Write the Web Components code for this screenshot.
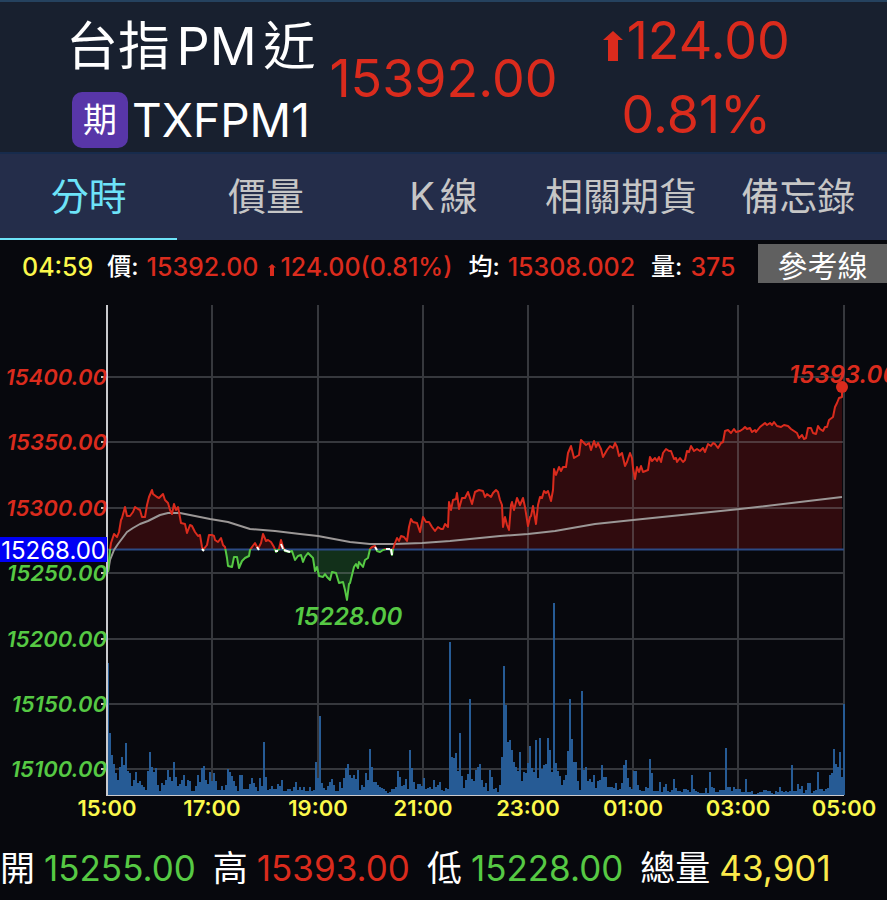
<!DOCTYPE html>
<html lang="zh-Hant">
<head>
<meta charset="utf-8">
<meta name="viewport" content="width=device-width, initial-scale=1">
<title>台指PM近</title>
<style>
  :root {
    --up: #da2b1d; --down: #56c944; --time: #fbf84b; --total: #fbe94a;
    --ink: #fff; --page: #07080d;
  }
  html { background: #07080d; }
  body { margin: 0; background: var(--page); color: var(--ink); font-family: Inter, "Noto Sans CJK TC", sans-serif; }
</style>
</head>
<body>
<quote-page></quote-page>

<script>
const define = (name, html, setup) => {
  const template = document.createElement('template');
  template.innerHTML = html;
  customElements.define(name, class extends HTMLElement {
    constructor() {
      super();
      this.attachShadow({ mode: 'open' }).append(template.content.cloneNode(true));
    }
    connectedCallback() { if (setup) setup(this, this.shadowRoot); }
  });
};

define('up-arrow', `
  <style>
    :host { display: inline-block; width: 20px; }
    svg { display: block; width: 100%; fill: currentColor; }
  </style>
  <svg viewBox="0 0 20 30" aria-hidden="true"><path d="M10 0 20 9H15V30H5V9H0Z"/></svg>`);

define('quote-header', `
  <style>
    :host { display: grid; height: 154px; box-sizing: border-box;
      grid-template-columns: minmax(0, 1fr) auto minmax(0, 1fr);
      border-top: 2px solid #25425f; border-bottom: 2px solid #172b4c; background: #18202f; line-height: 1; }
    .name, .change { display: flex; flex-direction: column; align-items: center; }
    .name { align-items: flex-start; padding-left: 66px; white-space: nowrap; }
    h1 { margin: 17px 0 0; font-size: 52px; font-weight: 400; line-height: 56px; text-autospace: normal; }
    .code { display: flex; align-items: center; gap: 4px; margin: 17px 0 0 6px; font-size: 46px; }
    .badge { display: grid; place-items: center; width: 56px; height: 56px; border-radius: 10px; background: #5836a8; font-size: 34px; }
    .price { align-self: center; padding-top: 4px; font-size: 52px; color: var(--up); }
    .change { color: var(--up); font-size: 52px; padding: 13px 52px 0 0; gap: 22px; }
    .change div { display: flex; align-items: center; gap: 4px; }
    up-arrow { margin-top: 10px; }
  </style>
  <div class="name"><h1>台指PM近</h1><div class="code"><span class="badge">期</span><span>TXFPM1</span></div></div>
  <div class="price">15392.00</div>
  <div class="change"><div><up-arrow></up-arrow><span>124.00</span></div><div>0.81%</div></div>`);

define('quote-tabs', `
  <style>
    :host { display: block; background: #242d4a; }
    nav { display: grid; grid-template-columns: repeat(5, minmax(0, 1fr)); }
    button { height: 86px; padding: 0; border: 0; border-bottom: 2px solid transparent; background: none; color: #c6c6c6;
      font: 38px/1 Inter, "Noto Sans CJK TC", sans-serif; text-autospace: normal; white-space: nowrap; }
    button[aria-selected="true"] { color: #6de3f8; border-bottom-color: #6de3f8; }
  </style>
  <nav role="tablist">
    <button role="tab" aria-selected="true">分時</button><button role="tab" aria-selected="false">價量</button><button role="tab" aria-selected="false">K線</button><button role="tab" aria-selected="false">相關期貨</button><button role="tab" aria-selected="false">備忘錄</button>
  </nav>`);

define('tick-info', `
  <style>
    :host { display: flex; align-items: center; height: 50px; box-sizing: border-box; padding: 4px 0 0 22px; font-size: 25px; line-height: 36px; font-weight: 500; white-space: nowrap; }
    span { margin-right: 16px; }
    b { font-size: 24px; font-weight: 500; margin-right: 8px; }
    .time { margin-right: 14px; color: var(--time); }
    .up { color: var(--up); }
    .move { display: flex; align-items: center; gap: 4px; }
    .price { margin-right: 10px; }
    up-arrow { width: 8px; margin-top: 6px; }
    button { align-self: flex-start; margin-left: auto; width: 129px; height: 39px; border: 0; padding: 0; background: #606060; color: #fff; font: 30px/36px "Noto Sans CJK TC", sans-serif; }
  </style>
  <span class="time">04:59</span><b>價:</b><span class="up price">15392.00</span>
  <span class="up move"><up-arrow></up-arrow>124.00(0.81%)</span>
  <b>均:</b><span class="up">15308.002</span><b>量:</b><span class="up">375</span>
  <button type="button">參考線</button>`);

define('day-summary', `
  <style>
    :host { display: flex; align-items: center; height: 68px; font-size: 35px; line-height: 48px; white-space: nowrap; }
    dl { display: flex; align-items: center; gap: 17px; margin: 0; }
    div { display: flex; align-items: center; gap: 9px; }
    dd { margin: 0; }
    .up { color: var(--up); } .down { color: var(--down); } .total { color: var(--total); }
  </style>
  <dl>
    <div><dt>開</dt><dd class="down">15255.00</dd></div>
    <div><dt>高</dt><dd class="up">15393.00</dd></div>
    <div><dt>低</dt><dd class="down">15228.00</dd></div>
    <div><dt>總量</dt><dd class="total">43,901</dd></div>
  </dl>`);

const PRICE = `108,572 110,550 111,543 112,540 114,534 117,537 119,532 121,520 122,518 125,507 127,516 130,516 133,512 135,507
138,509 140,510 142,517 145,517 147,505 149,497 152,490 153,494 157,497 159,498 163,494 165,500 168,503 170,510 172,514 174,504
176,510 178,507 179,512 181,523 185,524 187,533 190,525 192,526 195,532 198,536 200,535 202,547 203,550 207,545 209,535 212,535
214,536 215,540 218,542 221,538 223,545 225,547 227,558 228,566 232,567 234,557 237,557 239,568 242,561 245,558 249,556 250,550
252,547 255,543 258,549 261,543 263,534 266,541 268,540 271,542 274,547 276,552 279,549 281,540 283,547 285,551 289,552 292,551
295,560 298,556 301,555 303,562 305,557 308,553 311,556 313,558 315,571 317,567 319,576 323,577 325,574 327,577 330,580 332,572
336,573 339,583 343,582 345,590 347,600 349,584 350,583 354,567 356,564 358,568 359,562 363,567 365,560 368,558 370,549 372,547
375,546 377,551 380,552 383,550 386,549 389,549 391,550 392,555 393,549 395,543 397,538 399,541 401,536 404,537 407,541 409,527
411,519 413,522 417,523 420,532 423,517 426,522 429,522 432,527 435,531 438,527 441,529 443,529 445,524 448,527 449,502 451,510
453,500 456,499 457,493 459,509 462,498 465,498 468,492 472,504 475,492 479,490 483,491 485,497 487,494 491,497 493,493 496,490
498,492 500,500 502,505 503,527 505,517 507,525 509,530 511,505 512,502 514,510 517,498 520,505 523,498 525,507 528,526 530,517
531,516 533,506 536,524 538,505 540,497 542,498 544,491 546,493 548,491 551,501 553,490 554,469 556,475 559,467 561,471 563,467
566,467 568,453 571,446 574,458 579,455 581,440 583,442 586,445 589,443 591,450 594,441 596,447 598,443 601,449 603,457 607,450
610,446 613,448 615,443 617,447 619,456 622,453 625,466 627,462 630,453 632,458 633,468 635,479 637,467 639,472 641,466 643,472
648,470 650,457 652,461 655,458 657,461 659,457 661,462 663,453 666,449 669,451 671,451 674,459 676,458 677,462 680,458 683,462
685,460 687,451 689,452 691,446 694,451 697,449 700,451 703,448 705,452 708,444 711,446 713,443 715,444 718,448 721,443 723,442
725,431 728,430 731,433 734,429 736,432 740,431 743,429 745,427 747,429 750,428 752,432 755,430 756,432 760,427 765,423 767,425
770,423 772,425 774,422 777,426 781,427 784,425 788,426 791,429 794,431 797,433 799,438 802,435 804,439 806,438 808,428 811,428
813,433 816,434 818,426 820,429 823,431 825,427 827,427 829,420 833,417 835,407 837,403 839,398 842,397 842,387`;

const AVERAGE = `108,572 110,560 114,550 118,544 127,532 133,528 140,524 148,521 160,515 168,513 180,513 195,516 210,519 228,522
250,529 275,531 300,534 318,536 350,542 370,544 395,544 422,543 450,541 500,536 528,534 555,531 595,524 633,520 740,509 842,497`;

/* Volume, one value for each two units of the time axis. */
const VOLUME = [
132,62,40,31,22,15,28,38,30,52,24,22,9,15,23,12,14,10,8,5,24,43,28,23,27,10,4,12,10,15,25,18,14,33,18,9,11,15,20,9,
15,14,4,4,9,20,13,27,29,15,11,23,14,22,14,5,5,9,5,10,26,23,19,14,9,4,20,20,6,6,6,11,17,12,8,4,17,9,53,18,
5,6,9,6,6,11,9,15,4,4,6,6,4,8,13,5,8,5,8,4,4,8,4,5,33,17,79,12,7,5,9,13,16,10,4,4,13,7,17,27,
31,20,17,20,16,25,5,10,8,22,15,46,28,13,13,10,8,7,6,4,2,3,6,6,8,24,18,9,10,16,6,45,27,13,6,11,11,9,17,6,
7,8,6,15,8,10,13,5,4,7,6,153,38,37,42,24,62,19,7,15,21,96,16,14,25,28,31,15,8,12,4,25,18,6,7,3,10,38,129,90,
53,55,45,33,28,24,43,14,23,22,32,49,27,23,55,17,57,26,30,31,57,45,23,192,32,24,19,10,15,20,44,96,56,33,33,14,5,104,25,28,
14,16,13,20,7,14,15,30,18,18,8,8,8,7,12,5,6,12,30,35,17,8,6,24,24,10,5,4,4,8,7,36,22,4,4,4,13,3,8,11,
4,3,5,16,7,4,4,3,6,6,5,3,20,6,4,3,2,2,2,7,2,23,8,7,3,3,5,5,5,47,8,8,4,8,6,6,6,3,3,16,
3,3,4,1,1,2,3,3,5,5,4,4,2,1,4,3,8,4,3,4,3,4,30,4,4,11,6,9,2,5,12,12,2,4,5,23,6,6,4,6,
7,20,22,46,31,28,43,18,91];

define('intraday-chart', `
  <style>
    :host { display: block; }
    svg { display: block; width: 100%; font-family: Inter, sans-serif; font-weight: 600; font-size: 22px; }
    .grid { stroke: #8b8c92; stroke-opacity: .36; stroke-width: 2; fill: none; }
    .axis { stroke: #c9cacd; stroke-width: 2; fill: none; }
    .price { font-style: italic; font-weight: 600; }
    .scale { font-size: 22px; }
    .mark { font-size: 24px; }
    .base { font-size: 24px; font-weight: 400; fill: #fff; }
    .up { fill: var(--up); } .down { fill: var(--down); }
    .time { fill: var(--time); text-anchor: middle; }
    .line { fill: none; stroke-width: 2; stroke-linejoin: round; }
  </style>
  <svg viewBox="0 290 887 540" role="img" aria-label="分時走勢圖">
    <defs>
      <clipPath id="above"><rect x="108" y="290" width="737" height="259"/></clipPath>
      <clipPath id="below"><rect x="108" y="549" width="737" height="250"/></clipPath>
    </defs>
    <g id="areas"></g>
    <path class="grid" id="grid"/>
    <path id="bars" fill="#265b95"/>
    <path d="M108 549.5H844" stroke="#2c4b85" stroke-width="2"/>
    <g id="lines"></g>
    <path class="axis" d="M107 305V796"/>
    <path d="M107 795.5H844" stroke="#c9cacd"/>
    <rect x="0" y="537" width="107" height="25" fill="#0000f5"/>
    <path id="ticks" class="axis"/>
    <g id="labels"></g>
    <circle cx="842" cy="387" r="6" class="up"/>
  </svg>`,
(host, root) => {
  const $ = id => root.getElementById(id);
  const ys = [377, 442, 508, 573, 639, 704, 769];
  const xs = [212, 318, 423, 528, 633, 738, 844];
  $('grid').setAttribute('d', ys.map(y => `M108 ${y}H844`).join('') + xs.map(x => `M${x} 305V795`).join(''));
  $('ticks').setAttribute('d', ys.map(y => `M101 ${y}H107`).join(''));
  $('bars').setAttribute('d', VOLUME.map((h, i) => `M${107 + 2 * i} 795v${-h}h2v${h}z`).join(''));
  const area = `108,549 ${PRICE} 842,549`;
  $('areas').innerHTML = `
    <polygon points="${area}" fill="#300b0e" clip-path="url(#above)"/>
    <polygon points="${area}" fill="#12301a" clip-path="url(#below)"/>`;
  $('lines').innerHTML = `
    <polyline class="line" points="${AVERAGE}" stroke="#9b9796"/>
    <polyline class="line" points="${PRICE}" stroke="#da2b1d" clip-path="url(#above)"/>
    <polyline class="line" points="${PRICE}" stroke="#56c944" clip-path="url(#below)"/>
    <path class="line" stroke="#fff" d="M202 549L204 551M257 547L259 550M275 551L278 551M281 544L283 549M284 550L290 552M375 547L377 550M386 549L390 549M391 549L392 555"/>`;
  const prices = ['15400.00', '15350.00', '15300.00', '15250.00', '15200.00', '15150.00', '15100.00'];
  const times = ['15:00', '17:00', '19:00', '21:00', '23:00', '01:00', '03:00', '05:00'];
  $('labels').innerHTML =
    prices.map((p, i) => `<text class="price scale ${i < 3 ? 'up' : 'down'}" x="107" y="${ys[i] + 8}" text-anchor="end">${p}</text>`).join('') +
    times.map((t, i) => `<text class="time" x="${[107, ...xs][i]}" y="816">${t}</text>`).join('') +
    `<text class="base" x="106" y="559" text-anchor="end">15268.00</text>
     <text class="price mark down" x="348" y="625" text-anchor="middle">15228.00</text>
     <text class="price mark up" x="789" y="383">15393.00</text>`;
});

define('quote-page', `
  <style>
    :host { display: block; }
    main { display: flex; flex-direction: column; overflow: hidden; }
    day-summary { padding-top: 4px; }
  </style>
  <main>
    <quote-header></quote-header>
    <quote-tabs></quote-tabs>
    <tick-info></tick-info>
    <intraday-chart></intraday-chart>
    <day-summary></day-summary>
  </main>`);
</script>
</body>
</html>
